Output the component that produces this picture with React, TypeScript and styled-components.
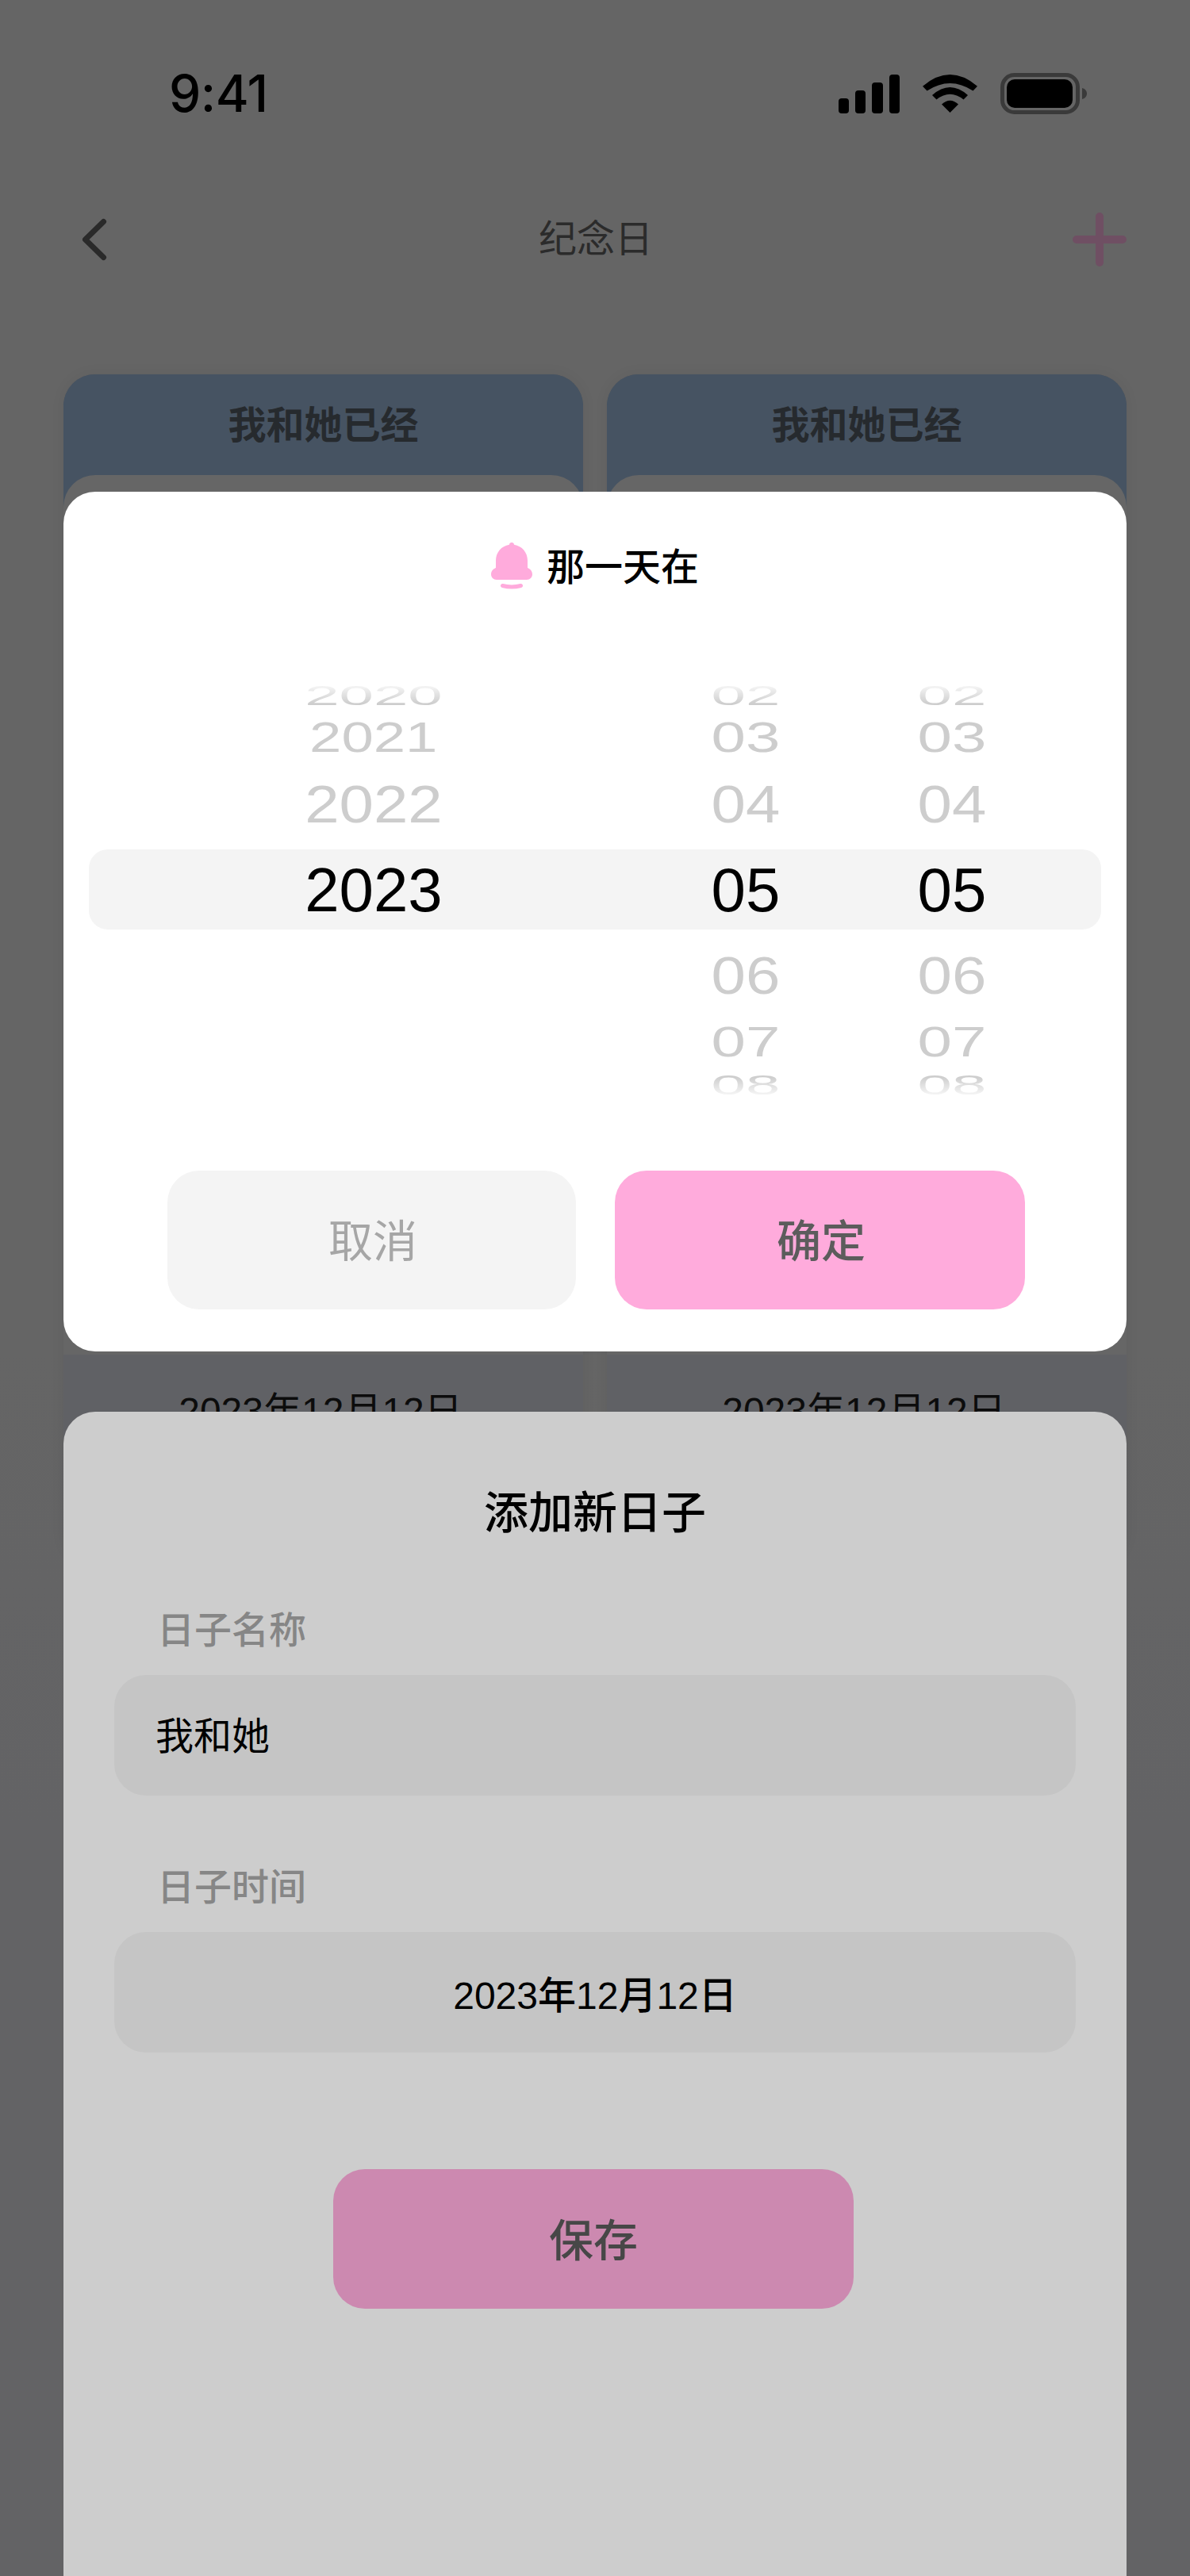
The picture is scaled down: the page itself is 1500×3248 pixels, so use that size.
import React from "react";
import styled, { createGlobalStyle } from "styled-components";

const FONT = `"Liberation Sans", "Noto Sans CJK SC", sans-serif`;

const Global = createGlobalStyle`
  html, body { margin: 0; padding: 0; background: #636365; }
  * { box-sizing: border-box; }
`;

const Screen = styled.div`
  position: relative;
  width: 1500px;
  height: 3248px;
  overflow: hidden;
  background: linear-gradient(#656565 0, #656565 1700px, #636365 2300px);
  font-family: ${FONT};
`;

const StatusBar = styled.div`
  display: flex;
  align-items: center;
  justify-content: space-between;
  height: 88px;
  margin-top: 74px;
  padding: 0 130px 0 213px;
`;

const Clock = styled.div`
  font-family: Inter, sans-serif;
  font-size: 64px;
  line-height: 88px;
  font-weight: 500;
  color: #000;
  letter-spacing: -0.5px;
`;

const StatusIcons = styled.div`
  display: flex;
  align-items: center;
  gap: 29px;
`;

const NavBar = styled.div`
  display: flex;
  align-items: center;
  justify-content: space-between;
  height: 68px;
  margin-top: 106px;
  padding: 0 80px 0 100px;
`;

const NavTitle = styled.div`
  font-size: 48px;
  line-height: 68px;
  color: #2b2b2b;
  margin-left: 10px;
`;

const CardGrid = styled.div`
  display: grid;
  grid-template-columns: 655px 655px;
  gap: 30px;
  margin-top: 136px;
  padding: 0 80px;
`;

const Card = styled.div`
  height: 1500px;
  border-radius: 40px;
  overflow: hidden;
  background: #606165;
  box-shadow: 0 0 18px rgba(0, 0, 0, 0.06);
`;

const CardHead = styled.div`
  height: 127px;
  padding-bottom: 8px;
  background: #465362;
  display: flex;
  align-items: center;
  justify-content: center;
  font-size: 48px;
  font-weight: 700;
  color: #262a2e;
`;

const CardHeadWrap = styled.div`
  background: #465362;
`;

const CardPanel = styled.div`
  height: 1109px;
  border-radius: 40px 40px 0 0;
  background: #666666;
`;

const CardDate = styled.div`
  margin-top: 44px;
  padding-right: 7px;
  text-align: center;
  font-size: 48px;
  line-height: 56px;
  color: #0c0c0c;
`;

const Modal = styled.div`
  position: absolute;
  left: 80px;
  top: 620px;
  width: 1340px;
  height: 1084px;
  border-radius: 40px;
  background: #fff;
  display: flex;
  flex-direction: column;
  align-items: center;
  padding-top: 64px;
`;

const ModalHead = styled.div`
  display: flex;
  align-items: center;
  gap: 18px;
  height: 59px;
`;

const ModalHeadText = styled.span`
  font-size: 48px;
  line-height: 59px;
  font-weight: 500;
  color: #000;
  padding-top: 3px;
`;

const Wheel = styled.div`
  position: relative;
  display: grid;
  grid-template-columns: 718px 220px 300px 38px;
  width: 1276px;
  margin-top: 120px;
  height: 519px;
`;

const Band = styled.div`
  position: absolute;
  left: 0;
  right: 0;
  top: 208px;
  height: 101px;
  border-radius: 24px;
  background: #f4f4f4;
`;

const WheelCol = styled.div`
  position: relative;
  display: flex;
  flex-direction: column;
  align-items: center;
`;

const WheelItem = styled.div<{ $h: number }>`
  height: ${(p) => p.$h}px;
  display: flex;
  align-items: center;
  justify-content: center;
`;

const WheelText = styled.span<{ $sx?: number; $sy: number; $on?: boolean; $fade?: "top" | "bottom" }>`
  display: block;
  font-size: 78px;
  line-height: 78px;
  color: ${(p) => (p.$on ? "#000" : "#cdcdcd")};
  transform: scale(${(p) => p.$sx ?? 1}, ${(p) => p.$sy});
  ${(p) =>
    p.$fade
      ? `-webkit-mask-image: linear-gradient(${p.$fade === "top" ? "to bottom" : "to top"}, rgba(0,0,0,.25) 20%, #000 80%);`
      : ""}
`;

const Actions = styled.div`
  display: flex;
  gap: 49px;
  margin-top: 94px;
  margin-left: 2px;
`;

const ActionButton = styled.div<{ $primary?: boolean }>`
  width: ${(p) => (p.$primary ? 517 : 515)}px;
  height: 175px;
  border-radius: 40px;
  display: flex;
  align-items: center;
  justify-content: center;
  padding: 0 0 7px 4px;
  font-size: 56px;
  font-weight: ${(p) => (p.$primary ? 500 : 400)};
  background: ${(p) => (p.$primary ? "#ffabdc" : "#f4f4f4")};
  color: ${(p) => (p.$primary ? "#5c5c5c" : "#a6a6a6")};
`;

const Sheet = styled.div`
  position: absolute;
  left: 80px;
  top: 1780px;
  width: 1340px;
  height: 1500px;
  border-radius: 40px 40px 0 0;
  background: #cdcdcd;
  display: flex;
  flex-direction: column;
  padding: 100px 64px 0;
`;

const SheetTitle = styled.div`
  height: 56px;
  line-height: 56px;
  text-align: center;
  font-size: 56px;
  font-weight: 500;
  color: #000;
`;

const FieldLabel = styled.div<{ $top: number }>`
  margin-top: ${(p) => p.$top}px;
  padding-left: 54px;
  height: 48px;
  line-height: 48px;
  font-size: 47px;
  font-weight: 500;
  color: #868686;
`;

const FieldBox = styled.div<{ $center?: boolean }>`
  margin-top: 32px;
  height: 152px;
  border-radius: 40px;
  background: #c5c5c5;
  display: flex;
  align-items: center;
  justify-content: ${(p) => (p.$center ? "center" : "flex-start")};
  padding: 0 52px ${(p) => (p.$center ? 0 : 7)}px;
  font-size: 48px;
  font-weight: ${(p) => (p.$center ? 500 : 400)};
  color: #000;
`;

const SaveButton = styled.div`
  align-self: center;
  margin-top: 147px;
  margin-left: -4px;
  padding-bottom: 6px;
  width: 656px;
  height: 176px;
  border-radius: 40px;
  background: #cc89b0;
  display: flex;
  align-items: center;
  justify-content: center;
  font-size: 56px;
  font-weight: 500;
  color: #474747;
`;

const Signal = () => (
  <svg width="77" height="49" viewBox="0 0 77 49" fill="#000">
    <rect x="0" y="30" width="13" height="19" rx="4" />
    <rect x="21" y="20" width="13" height="29" rx="4" />
    <rect x="42" y="10" width="14" height="39" rx="4" />
    <rect x="64" y="0" width="13" height="49" rx="4" />
  </svg>
);

const Wifi = () => (
  <svg width="69" height="48" viewBox="0 0 69 48" fill="#000">
    <path d="M0 14.7Q34.5 -14.7 69 14.7L63.5 20.5Q34.5 1.5 5.5 20.5Z" />
    <path d="M12 26Q34.5 6 57 26L51.5 31.5Q34.5 18 17.5 31.5Z" />
    <path d="M24 37.5Q34.5 28 45 37.5L34.5 48Z" />
  </svg>
);

const Battery = () => (
  <svg width="109" height="52" viewBox="0 0 109 52">
    <rect x="2.5" y="2.5" width="95" height="47" rx="15" fill="none" stroke="#3a3a3a" strokeWidth="5" />
    <rect x="8" y="8" width="83" height="36" rx="10" fill="#000" />
    <path d="M103 19C107 20 109 23 109 26C109 29 107 32 103 33Z" fill="#3a3a3a" />
  </svg>
);

const BackIcon = () => (
  <svg width="40" height="68" viewBox="0 0 40 68" fill="none">
    <path d="M30.5 11.500L7.500 34L30.500 56.500" stroke="#2a2a2a" strokeWidth="7" strokeLinecap="round" strokeLinejoin="round" />
  </svg>
);

const PlusIcon = () => (
  <svg width="68" height="68" viewBox="0 0 68 68" fill="none">
    <path d="M34 5V63M5 34H63" stroke="#6f4f63" strokeWidth="10" strokeLinecap="round" />
  </svg>
);

const BellIcon = () => (
  <svg width="52" height="59" viewBox="0 0 52 59" fill="#ffabdc">
    <path d="M26 0c1.700 0 3 1 3 2.800C39 4.500 46 12.500 46 23V32c0 0 6 2 6 8c0 4-3 7-7 7H7c-4 0-7-3-7-7c0-6 6-8 6-8V23C6 12.500 13 4.500 23 2.800C23 1 24.300 0 26 0Z" />
    <path d="M14.500 54.500Q26 57.500 37.500 54.500" fill="none" stroke="#ffabdc" strokeWidth="5" strokeLinecap="round" />
  </svg>
);

type Row = { t: string; h: number; sy: number; sx?: number; on?: boolean; fade?: "top" | "bottom" };

const topRows = (a: string, b: string, c: string, d: string, sx?: number): Row[] => [
  { t: a, h: 27, sy: 0.45, fade: "top" },
  { t: b, h: 80, sy: 0.68, sx },
  { t: c, h: 88, sy: 0.85 },
  { t: d, h: 128, sy: 1, on: true },
];

const bottomRows = (a: string, b: string, c: string): Row[] => [
  { t: a, h: 88, sy: 0.85 },
  { t: b, h: 80, sy: 0.68 },
  { t: c, h: 28, sy: 0.45, fade: "bottom" },
];

const columns: Row[][] = [
  topRows("2020", "2021", "2022", "2023", 0.93),
  [...topRows("02", "03", "04", "05"), ...bottomRows("06", "07", "08")],
  [...topRows("02", "03", "04", "05"), ...bottomRows("06", "07", "08")],
];

export default function App() {
  return (
    <Screen>
      <Global />
      <StatusBar>
        <Clock>9:41</Clock>
        <StatusIcons>
          <Signal />
          <Wifi />
          <Battery />
        </StatusIcons>
      </StatusBar>
      <NavBar>
        <BackIcon />
        <NavTitle>纪念日</NavTitle>
        <PlusIcon />
      </NavBar>
      <CardGrid>
        {[0, 1].map((i) => (
          <Card key={i}>
            <CardHeadWrap>
              <CardHead>我和她已经</CardHead>
              <CardPanel />
            </CardHeadWrap>
            <CardDate>2023年12月12日</CardDate>
          </Card>
        ))}
      </CardGrid>
      <Modal>
        <ModalHead>
          <BellIcon />
          <ModalHeadText>那一天在</ModalHeadText>
        </ModalHead>
        <Wheel>
          <Band />
          {columns.map((col, i) => (
            <WheelCol key={i}>
              {col.map((r) => (
                <WheelItem key={r.t} $h={r.h}>
                  <WheelText $sx={r.sx} $sy={r.sy} $on={r.on} $fade={r.fade}>
                    {r.t}
                  </WheelText>
                </WheelItem>
              ))}
            </WheelCol>
          ))}
        </Wheel>
        <Actions>
          <ActionButton>取消</ActionButton>
          <ActionButton $primary>确定</ActionButton>
        </Actions>
      </Modal>
      <Sheet>
        <SheetTitle>添加新日子</SheetTitle>
        <FieldLabel $top={96}>日子名称</FieldLabel>
        <FieldBox>我和她</FieldBox>
        <FieldLabel $top={92}>日子时间</FieldLabel>
        <FieldBox $center>2023年12月12日</FieldBox>
        <SaveButton>保存</SaveButton>
      </Sheet>
    </Screen>
  );
}
